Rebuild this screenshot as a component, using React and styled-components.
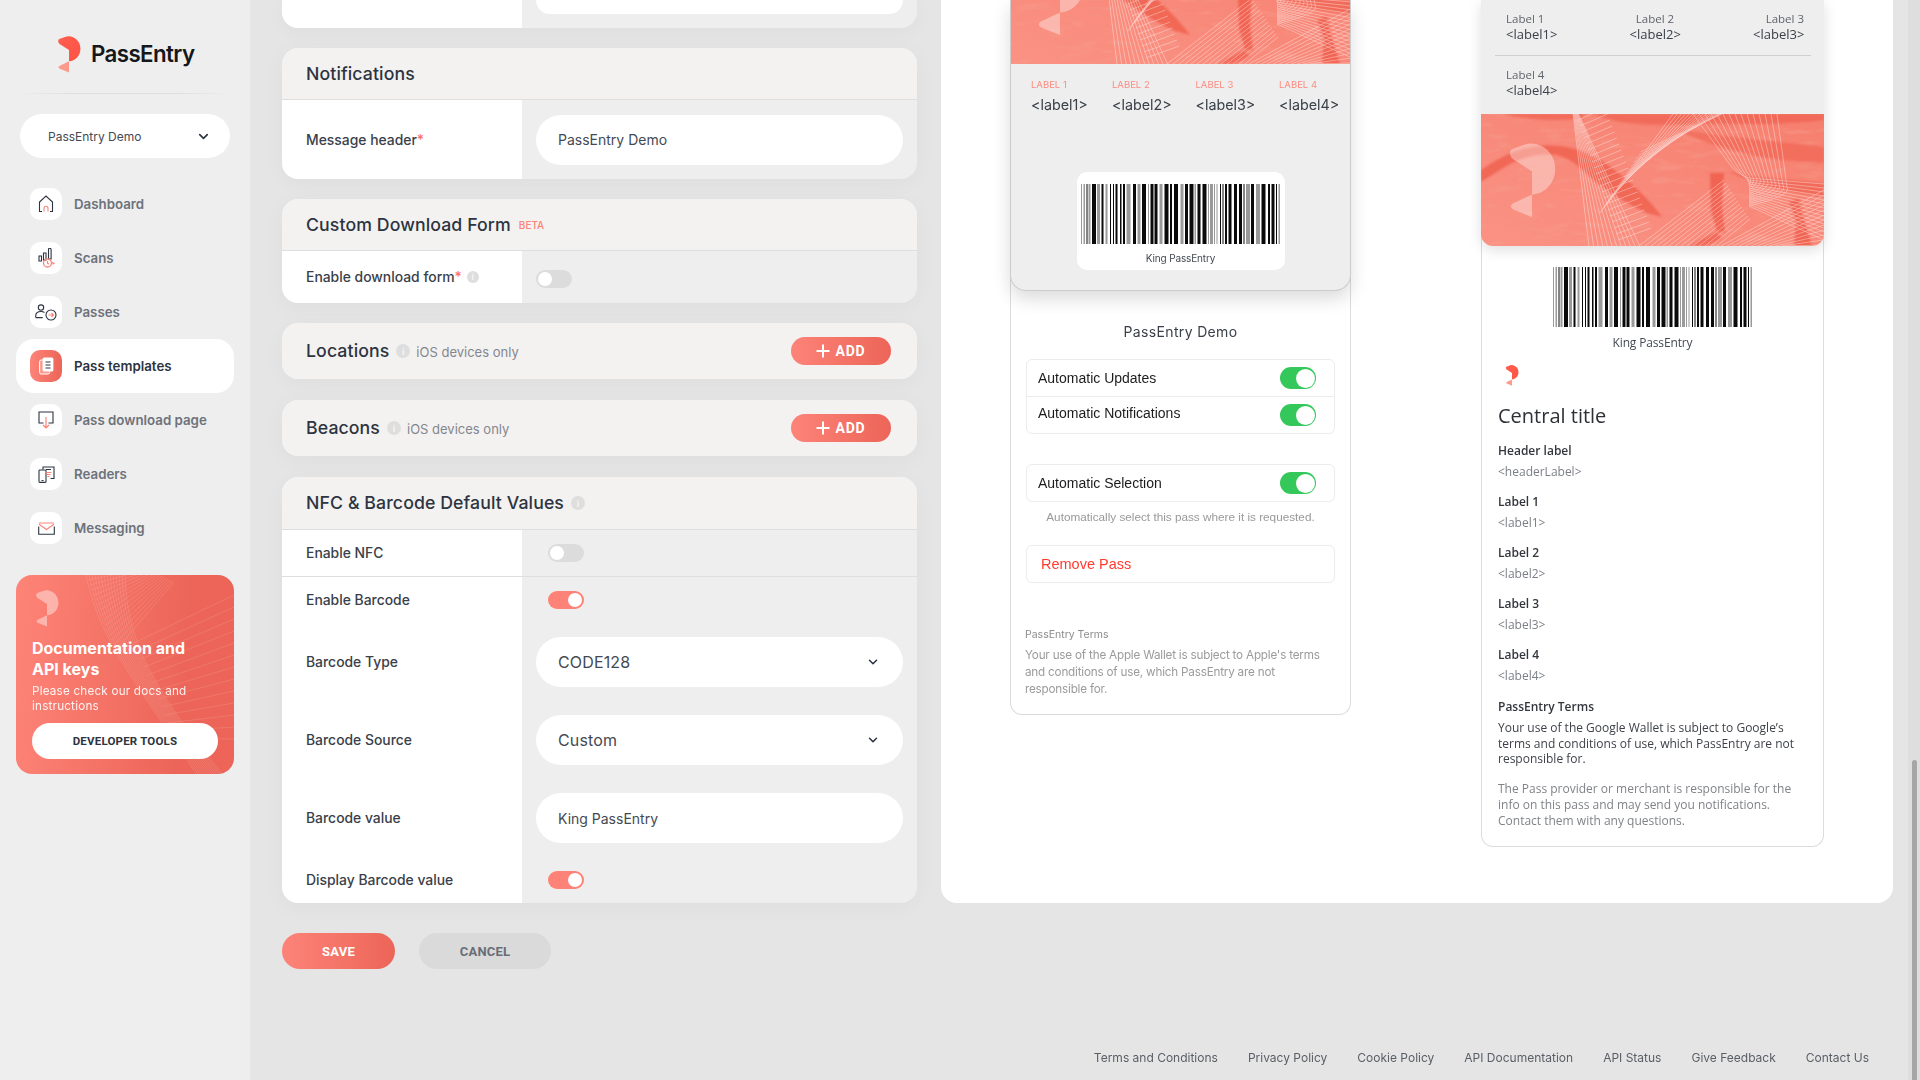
import React from "react";
import styled, { createGlobalStyle } from "styled-components";
import { ChevronDown } from "lucide-react";

const Global = createGlobalStyle`
  html, body { margin: 0; padding: 0; height: 1080px; overflow: hidden; background: #e5e5e5; }
  body { font-family: Inter, "Liberation Sans", sans-serif; color: #2d3440; }
  * { box-sizing: border-box; }
`;

const Page = styled.div`display: flex; width: 1920px; height: 1080px; overflow: hidden;`;

/* ---------- sidebar ---------- */
const Sidebar = styled.aside`
  width: 250px; flex: none; background: #eeeeee; padding: 36px 16px 0;
  display: flex; flex-direction: column;
`;
const Brand = styled.div`display: flex; align-items: center; gap: 10px; padding-left: 41px; height: 37px;`;
const BrandName = styled.span`font-size: 22.3px; font-weight: 600; letter-spacing: -0.6px; color: #15171a; margin-bottom: 3px;`;
const SideRule = styled.div`
  height: 1px; margin: 20px 0 20px;
  background: linear-gradient(90deg, transparent, #dfdfdf 25%, #dfdfdf 75%, transparent);
`;
const OrgSelect = styled.div`
  height: 44px; margin: 0 4px; border-radius: 22px; background: #fff; display: flex; align-items: center;
  justify-content: space-between; padding: 0 19px 0 28px; font-size: 12px; color: #444a53;
`;
const NavList = styled.nav`display: flex; flex-direction: column; margin-top: 19px;`;
const NavItem = styled.div`
  height: 54px; display: flex; align-items: center; gap: 12px; padding-left: 14px; border-radius: 18px;
  background: ${p => (p.$active ? "#fff" : "transparent")};
`;
const NavIcon = styled.span`
  width: 32px; height: 32px; border-radius: 10px; display: flex; align-items: center; justify-content: center;
  background: ${p => (p.$active ? "linear-gradient(90deg,#fd8378,#ec6558)" : "#fff")};
`;
const NavLabel = styled.span`
  font-size: 13.3px; font-weight: 600; color: ${p => (p.$active ? "#2d3440" : "#6d727a")};
`;
const Promo = styled.section`
  position: relative; overflow: hidden; margin-top: 20px; height: 199px; border-radius: 16px; color: #fff;
  background: linear-gradient(95deg,#fe8478,#ec6558 75%); padding: 15px 16px 0;
`;
const PromoLines = styled.svg`position: absolute; inset: 0; width: 100%; height: 100%;`;
const PromoBody = styled.div`position: relative; display: flex; flex-direction: column;`;
const PromoMark = styled.div`height: 37px; margin-left: 3px;`;
const PromoTitle = styled.div`font-size: 16px; line-height: 21px; font-weight: 700; margin-top: 11px;`;
const PromoText = styled.div`font-size: 11.7px; line-height: 15px; margin-top: 4px; opacity: .9; letter-spacing: .2px;`;
const PromoButton = styled.div`
  height: 36px; margin-top: 9px; border-radius: 18px; background: #fff; display: flex; align-items: center; justify-content: center;
  font-family: Roboto, sans-serif; font-size: 11.5px; font-weight: 700; color: #2d3440; letter-spacing: .2px;
`;

/* ---------- main ---------- */
const Main = styled.main`flex: 1; min-width: 0; display: flex; flex-direction: column; height: 1080px;`;
const Columns = styled.div`display: flex; align-items: flex-start; gap: 24px; padding-left: 32px; padding-right: 15px;`;
const FormCol = styled.div`width: 635px; flex: none; display: flex; flex-direction: column;`;

const Card = styled.section`
  border-radius: 16px; overflow: hidden; margin-bottom: ${p => p.$gap ?? 20}px;
  background: #eeeeee; box-shadow: 0 4px 22px rgba(0,0,0,.035);
`;
const ClippedCard = styled(Card)`
  border-radius: 0 0 16px 16px; height: 28px; display: grid; grid-template-columns: 240px 1fr;
`;
const ClippedLabel = styled.div`background: #fff;`;
const ClippedValue = styled.div`padding: 0 14px;`;
const ClippedInput = styled.div`height: 14px; background: #fff; border-radius: 0 0 22px 22px;`;
const CardHead = styled.header`
  height: ${p => p.$h || 52}px; background: #f3f2f1; display: flex; align-items: center; padding: 0 26px 0 24px;
  border-bottom: ${p => (p.$flat ? "none" : "1px solid #dedede")};
`;
const CardTitle = styled.h2`margin: 0 0 ${p => p.$up || 0}px; font-size: 17.7px; font-weight: 500; color: #2d3440; letter-spacing: .1px;`;
const Beta = styled.span`font-size: 10px; color: #fd8378; font-weight: 500; margin-left: 8px;`;
const Muted = styled.span`font-size: 13px; color: #83878d; margin-left: 6px; padding-top: 2px;`;
const Info = styled.span`
  display: inline-flex; align-items: center; justify-content: center; width: ${p => p.$s || 14}px; height: ${p => p.$s || 14}px;
  margin-left: ${p => p.$ml ?? 7}px; border-radius: 50%; background: #dedede; color: #f5f5f5; font-size: 9px; font-weight: 700;
`;
const AddButton = styled.div`
  margin-left: auto; width: 100px; height: 28px; border-radius: 14px; display: flex; align-items: center; justify-content: center; gap: 5px;
  background: linear-gradient(90deg,#fd8378,#ec6558); color: #fff; font-family: Roboto, sans-serif; font-weight: 700; font-size: 14px; letter-spacing: .8px;
`;
const PlusGlyph = styled.svg`display: block; width: 14px; height: 14px;`;
const Row = styled.div`
  display: grid; grid-template-columns: 240px 1fr; height: ${p => p.$h}px;
  border-bottom: ${p => (p.$rule ? "1px solid #dedede" : "none")};
`;
const RowLabel = styled.div`
  background: #fff; padding: ${p => p.$down ? "1px 0 0 24px" : "0 0 1px 24px"}; display: flex; align-items: center;
  font-size: 13.9px; font-weight: 500; color: #3a4049;
`;
const Star = styled.span`color: #fd6f62;`;
const RowValue = styled.div`display: flex; align-items: center; padding: ${p => p.$top ?? 0}px 14px 0 ${p => p.$left ?? 14}px;`;
const Pill = styled.div`
  flex: 1; height: 50px; border-radius: 25px; background: #fff; display: flex; align-items: center; justify-content: space-between;
  padding: 0 23px 0 22px; font-size: ${p => p.$big ? 16 : 14}px; color: #444a53; letter-spacing: ${p => p.$big ? ".15px" : "0"};
`;
const Toggle = styled.span`
  width: 36px; height: 18px; border-radius: 9px; position: relative; display: block;
  background: ${p => (p.$on ? "#fd8378" : "#dcdcdc")};
  &::after {
    content: ""; position: absolute; top: 2px; width: 14px; height: 14px; border-radius: 50%; background: #fff;
    ${p => (p.$on ? "right: 2px;" : "left: 2px;")}
  }
`;
const Actions = styled.div`display: flex; gap: 24px; margin-top: 10px;`;
const Btn = styled.div`
  height: 36px; width: ${p => p.$w}px; border-radius: 18px; display: flex; align-items: center; justify-content: center;
  font-family: Roboto, sans-serif; font-size: 13px; font-weight: 700; letter-spacing: .2px;
  background: ${p => (p.$primary ? "linear-gradient(90deg,#fd8378,#ec6558)" : "#dadada")};
  color: ${p => (p.$primary ? "#fff" : "#696e75")};
`;

/* ---------- preview panel ---------- */
const Panel = styled.section`
  width: 952px; height: 903px; flex: none; background: #fff; border-radius: 0 0 16px 16px; padding: 0 69px;
  display: flex; justify-content: space-between; align-items: flex-start;
`;
const Phone = styled.article`
  width: ${p => p.$w}px; border: 1px solid #dcdcdc; border-top: none; border-radius: 0 0 12px 12px; background: #fff;
`;
const IosPass = styled.div`
  margin: 0 -1px; background: #eeeeee; border: 1px solid #cccccc; border-top: none; border-radius: 0 0 16px 16px;
  box-shadow: 0 8px 18px rgba(0,0,0,.14); padding-bottom: 20px;
`;
const ArtClip = styled.div`height: ${p => p.$h}px; overflow: hidden; display: flex; align-items: flex-end;`;
const ArtSvg = styled.svg`display: block; flex: none; width: 100%; height: 132px;`;
const IosFields = styled.div`display: grid; grid-template-columns: 81px 83.5px 83.5px auto; padding: 14px 0 0 20px;`;
const IosKey = styled.div`font-size: 9.5px; line-height: 14px; color: #fd8c80; white-space: nowrap;`;
const IosVal = styled.div`font-size: 14.3px; line-height: 22px; margin-top: 2px; color: #3a4049; white-space: nowrap;`;
const CodeBox = styled.div`
  width: 208px; height: 98px; margin: 56px auto 0; background: #fff; border-radius: 10px; padding-top: 12px;
  display: flex; flex-direction: column; align-items: center;
`;
const BarSvg = styled.svg`display: block; width: 200px; height: 60px; flex: none;`;
const CodeCaption = styled.div`font-size: ${p => p.$s}px; line-height: 14px; margin-top: ${p => p.$mt}px; color: #444a53; letter-spacing: -.15px; text-align: center;`;
const IosBody = styled.div`padding: 31px 15px 16px;`;
const IosName = styled.div`font-size: 14px; line-height: 20px; text-align: center; color: #3a4049; letter-spacing: .35px;`;
const SetBox = styled.div`border: 1px solid #ececec; border-radius: 6px; margin-top: ${p => p.$mt}px;`;
const SetRow = styled.div`
  height: ${p => p.$h}px; display: flex; align-items: center; justify-content: space-between; padding: 0 18px 0 11px;
  font-family: "Liberation Sans", Arial, sans-serif; font-size: 14px; color: #1c1c1e;
  border-bottom: ${p => (p.$rule ? "1px solid #ececec" : "none")};
`;
const SetText = styled.span`margin-bottom: ${p => p.$up || 0}px;`;
const IosToggle = styled.span`
  width: 36px; height: 22px; border-radius: 11px; background: #34c759; position: relative; display: block;
  &::after { content: ""; position: absolute; right: 1.5px; top: 1.5px; width: 19px; height: 19px; border-radius: 50%; background: #fff; }
`;
const IosHelp = styled.div`
  font-family: "Liberation Sans", Arial, sans-serif; font-size: 11.75px; line-height: 16px; text-align: center; color: #999; margin-top: 7px;
`;
const Remove = styled.div`
  height: 38px; margin-top: 20px; border: 1px solid #ececec; border-radius: 6px; display: flex; align-items: center; padding-left: 14px;
  font-family: "Liberation Sans", Arial, sans-serif; font-size: 14.5px; color: #ff3b30;
`;
const IosTermsTitle = styled.div`font-size: 10.5px; line-height: 14px; color: #8d8d8d; margin: 45px 0 0 -1px;`;
const IosTerms = styled.p`font-size: 11.7px; line-height: 17px; color: #9b9b9b; margin: 5px 0 0 -1px; letter-spacing: -.2px;`;

const AndPass = styled.div`
  margin: 0 -1px; border-radius: 0 0 12px 12px; overflow: hidden; box-shadow: 0 4px 14px rgba(0,0,0,.13);
`;
const AndHead = styled.div`background: #eeeeee; height: 114px; padding-top: 11px; font-family: "Open Sans", sans-serif;`;
const AndFields = styled.div`display: flex; justify-content: ${p => p.$spread ? "space-between" : "flex-start"}; padding: 0 20px 0 25px;`;
const AndField = styled.div`text-align: ${p => p.$align || "left"}; width: 51px; white-space: nowrap;`;
const AndKey = styled.div`font-size: 11.5px; line-height: 15px; color: #60646b;`;
const AndVal = styled.div`font-size: 13px; line-height: 15px; margin-top: 1px; color: #3a4049;`;
const AndRule = styled.div`height: 1px; background: #cfcfcf; margin: 12.5px 13px 11px 14px;`;
const AndBody = styled.div`padding: 21px 0 18px; font-family: "Open Sans", sans-serif; display: flex; flex-direction: column;`;
const AndCode = styled.div`width: 200px; align-self: center;`;
const AndLogo = styled.div`margin: 15px 0 0 23px; height: 21px;`;
const AndText = styled.div`padding: 16px 25px 0 16px;`;
const Central = styled.h3`margin: 0; font-size: 20px; line-height: 28px; font-weight: 400; color: #2d3136;`;
const InfoKey = styled.div`font-size: 12px; line-height: 18px; font-weight: 600; color: #33373d; margin-top: 12.1px;`;
const InfoVal = styled.div`font-size: 12px; line-height: 18px; color: #7b7f85; margin-top: 3px;`;
const Para = styled.p`
  font-size: 12px; line-height: 15.7px; margin: ${p => p.$mt}px 0 0; color: ${p => p.$dim ? "#808388" : "#3e4248"};
`;

/* ---------- footer and scrollbar ---------- */
const Footer = styled.footer`
  margin-top: auto; display: flex; justify-content: flex-end; gap: 30px; padding: 0 39px 14px 0;
  font-size: 12px; line-height: 16px; color: #5a5f66;
`;
const Track = styled.div`width: 12px; flex: none; height: 1080px; background: #dedede; display: flex; flex-direction: column; justify-content: flex-end; padding: 0 3px 0 4px;`;
const Thumb = styled.div`height: 320px; background: #a6a6a6; border-radius: 3px 3px 0 0;`;

/* ---------- drawings ---------- */
const LOGO_A = "M1 5.5Q.6 3.5 2.8 2.7L8 .9C10 .1 12 0 14 .5C20 2 23.6 7 23.6 13C23.6 20 18.4 25.6 12 25.7L12 14.2L2.4 8Q1.2 7 1 5.5Z";
const LOGO_B = "M12 25.7L12 37L2.6 33.2Q.2 31.6 2.6 30.2Z";

function Logo({ w = 24, h = 37, id = "lg", solid }) {
  return (
    <svg width={w} height={h} viewBox="0 0 24 37.5" aria-hidden="true">
      <defs>
        <linearGradient id={id} x1="0" y1="0" x2="1" y2="1">
          <stop offset="0" stopColor="#ff5f50" /><stop offset="1" stopColor="#fd5244" />
        </linearGradient>
      </defs>
      <path d={LOGO_A} fill={solid || `url(#${id})`} />
      <path d={LOGO_B} fill={solid || "#fd9a8e"} />
    </svg>
  );
}

const bars = (() => {
  let s = 97, x = 0; const out = [];
  const rnd = () => ((s = (s * 16807) % 2147483647) % 1000) / 1000;
  while (x < 200) {
    const w = [1, 1, 1.5, 2, 2, 3, 4][Math.floor(rnd() * 7)];
    const g = [1, 1.5, 2, 1.5, 2.5][Math.floor(rnd() * 5)];
    const c = rnd() > 0.62 ? "#9a9a9a" : "#0a0a0a";
    out.push({ x, w: Math.min(w, 200 - x), c });
    x += w + g;
  }
  return out;
})();

function Barcode() {
  return (
    <BarSvg viewBox="0 0 200 60" aria-hidden="true">
      {bars.map((b, i) => <rect key={i} x={b.x} y="0" width={b.w} height="60" fill={b.c} />)}
    </BarSvg>
  );
}

function range(n) { return Array.from({ length: n }, (_, i) => i); }

function PassArt() {
  return (
    <ArtSvg viewBox="0 0 343 132" preserveAspectRatio="xMidYMax slice" aria-hidden="true">
      <defs>
        <filter id="artSoft" x="-5%" y="-5%" width="110%" height="110%"><feGaussianBlur stdDeviation=".9" /></filter>
        <filter id="artMottle" x="0" y="0" width="100%" height="100%">
          <feTurbulence type="fractalNoise" baseFrequency=".035 .14" numOctaves="3" seed="7" />
          <feColorMatrix values="0 0 0 0 .93  0 0 0 0 .36  0 0 0 0 .29  0 0 0 3.4 -1.75" />
        </filter>
        <linearGradient id="artBase" x1="0" y1="1" x2="1" y2="0">
          <stop offset="0" stopColor="#fa9284" /><stop offset="1" stopColor="#f67f6e" />
        </linearGradient>
      </defs>
      <rect width="343" height="132" fill="url(#artBase)" />
      <rect width="343" height="132" filter="url(#artMottle)" opacity=".38" />
      <g fill="#f0604f" filter="url(#artSoft)">
        <path d="M0 56C19 43 34 36 52 33C70 30 92 30 119 46C146 63 166 83 181 103L166 99C139 86 126 76 112 66C104 58 92 45 76 41C60 38 36 44 19 56L0 68Z" opacity=".85" />
        <path d="M196 16L252 23L343 33V49C318 48 298 46 279 43C250 36 220 28 196 16Z" opacity=".6" />
        <path d="M246 56C262 62 272 63 279 63L343 69V83C310 78 272 72 246 56Z" opacity=".7" />
        <path d="M22 0H102V4C80 7 50 7 22 0ZM112 0H343V6C300 12 250 9 190 11C160 12 130 8 112 0Z" opacity=".7" />
        <path d="M229 59H243L241 92L244 118H236L230 96Z" opacity=".9" />
        <path d="M208 132L235 118L241 124L226 132Z" opacity=".8" />
        <path d="M308 88L318 84L323 104L331 132H313L315 108Z" opacity=".9" />
      </g>
      <g stroke="#fff" strokeWidth=".6" opacity=".6" fill="none">
        {range(12).map(i => <line key={"a" + i} x1={92 + i * .5} y1="0" x2={108 + i * 4.6} y2="132" />)}
        {range(22).map(i => <line key={"b" + i} x1={95 + i * 2} y1={i * 6} x2={122 + i * 2.3} y2={i * 6 - 12} />)}
        {range(18).map(i => <line key={"c" + i} x1={119 + i * 2.4} y1={99 - i * 3.6} x2={192 + i * 5} y2={-i} />)}
        {range(14).map(i => <line key={"d" + i} x1={158 + i * 6} y1={132} x2={243 + i * 2} y2={66 + i * 3} />)}
        {range(15).map(i => <path key={"e" + i} d={`M${212 + i * 6} 0L${250 + i * 4} ${52 + i * 1.5}Q${256 + i * 4} ${60 + i * 1.5} 268 ${64 + i * 2}L343 ${70 + i * 4}`} />)}
        {range(14).map(i => <line key={"f" + i} x1={343} y1={76 + i * 5} x2={240 + i * 6} y2={132} />)}
      </g>
      <g fill="#fff" opacity=".36" transform="translate(27 29) scale(2)">
        <path d={LOGO_A} /><path d={LOGO_B} />
      </g>
    </ArtSvg>
  );
}

function PromoArt() {
  return (
    <PromoLines viewBox="0 0 218 199" preserveAspectRatio="none" aria-hidden="true">
      <g stroke="#fff" fill="none" strokeWidth=".55" opacity=".22">
        {range(14).map(i => <path key={"m" + i} d={`M${70 + i * 3} 0C${84 + i * 2} 70 ${130 + i} 120 ${180 + i * 2} 199`} />)}
        {range(16).map(i => <line key={"n" + i} x1={70 + i * 2} y1={i * 5} x2={128 + i * 2} y2={-8 + i} />)}
        {range(13).map(i => <line key={"o" + i} x1={118 + i * 3.4} y1={68 + i * 8} x2={218} y2={20 + i * 12} />)}
      </g>
    </PromoLines>
  );
}

const ink = "#2d3440", acc = "#fd8378";
const icons = {
  home: <svg width="16" height="18" viewBox="0 0 16 18" fill="none" strokeWidth="1.1"><path stroke={ink} d="M4 16.5H1.5V7L8 1l6.5 6v9.5H12" /><path stroke={acc} d="M6 16.5v-3.2a2 2 0 0 1 4 0v3.2" /></svg>,
  scans: <svg width="17" height="20" viewBox="0 0 17 20" fill="none" strokeWidth="1.1"><path stroke={ink} d="M1 8h2.5v5H1zM5.5 5H8v7H5.5zM10.5 1.5a1.3 1.3 0 0 1 2.6 0V11h-2.6z" /><circle cx="9.5" cy="15" r="4" stroke={acc} strokeWidth="1.3" /><path stroke={acc} d="M9.5 13v2.3l1.5.7M14 14.5l2 .8-1.4 1" /></svg>,
  passes: <svg width="22" height="17" viewBox="0 0 22 17" fill="none" strokeWidth="1.1"><circle cx="6" cy="3.6" r="2.7" stroke={ink} /><path stroke={ink} d="M.7 13.5v-1.5c0-2.6 2-4.5 5.3-4.5 1.5 0 2.7.4 3.5 1M.7 13.6h7" /><circle cx="16" cy="11" r="5" stroke={ink} /><path stroke={acc} d="M13.5 11h5M16.5 9l2 2-2 2" /></svg>,
  template: <svg width="15" height="18" viewBox="0 0 15 18" fill="none"><rect x=".6" y="3" width="10" height="14" rx="1.5" stroke="#fff" strokeWidth="1" fill="#fd9a8e" /><rect x="3.6" y=".6" width="10.8" height="14" rx="1.5" fill="#fff" /><path stroke={ink} strokeWidth="1" d="M6.5 5h5M6.5 8h5M6.5 11h5" /></svg>,
  download: <svg width="16" height="18" viewBox="0 0 16 18" fill="none" strokeWidth="1.1"><path stroke={ink} d="M5.5 12H1V1h14v11h-4.5" /><path stroke={acc} strokeWidth="1.2" d="M8 6v11M5 14l3 3 3-3" /></svg>,
  readers: <svg width="17" height="17" viewBox="0 0 17 17" fill="none" strokeWidth="1.1"><path stroke={ink} d="M5 3.5V1h11v11.5h-3.5" /><rect x="1" y="4" width="7" height="12.4" rx=".8" stroke={ink} /><path stroke={ink} d="M3.5 14.5h2M8 3.5h5" /><path stroke={acc} d="M7.5 6.5h6M8.5 8.5h4M9.5 10.5h2" /></svg>,
  mail: <svg width="17" height="13" viewBox="0 0 17 13" fill="none" strokeWidth="1.1"><path stroke={acc} d="M1 2.2 8.5 7.5 16 2.2M1 1h15" /><path stroke={ink} d="M.7 4.5V12.3h15.6V4.5" /></svg>,
};

const nav = [
  ["home", "Dashboard"], ["scans", "Scans"], ["passes", "Passes"], ["template", "Pass templates", true],
  ["download", "Pass download page"], ["readers", "Readers"], ["mail", "Messaging"],
];

const footerLinks = ["Terms and Conditions", "Privacy Policy", "Cookie Policy", "API Documentation", "API Status", "Give Feedback", "Contact Us"];

const Chevron = () => <ChevronDown size={15} strokeWidth={2.6} color="#2d3440" />;
const SmallChevron = () => <ChevronDown size={14} strokeWidth={2.6} color="#2d3440" />;
const Add = () => (
  <AddButton>
    <PlusGlyph viewBox="0 0 14 14" aria-hidden="true"><path d="M7 .5v13M.5 7h13" stroke="#fff" strokeWidth="2" /></PlusGlyph>
    ADD
  </AddButton>
);

export default function App() {
  return (
    <Page>
      <Global />
      <Sidebar>
        <Brand><Logo id="brand" /><BrandName>PassEntry</BrandName></Brand>
        <SideRule />
        <OrgSelect>PassEntry Demo<Chevron /></OrgSelect>
        <NavList>
          {nav.map(([k, l, a]) => (
            <NavItem key={l} $active={a}>
              <NavIcon $active={a}>{icons[k]}</NavIcon>
              <NavLabel $active={a}>{l}</NavLabel>
            </NavItem>
          ))}
        </NavList>
        <Promo>
          <PromoArt />
          <PromoBody>
            <PromoMark><Logo w={24} h={37} id="promo" solid="rgba(255,255,255,.42)" /></PromoMark>
            <PromoTitle>Documentation and<br />API keys</PromoTitle>
            <PromoText>Please check our docs and<br />instructions</PromoText>
            <PromoButton>DEVELOPER TOOLS</PromoButton>
          </PromoBody>
        </Promo>
      </Sidebar>

      <Main>
        <Columns>
          <FormCol>
            <ClippedCard>
              <ClippedLabel />
              <ClippedValue><ClippedInput /></ClippedValue>
            </ClippedCard>

            <Card>
              <CardHead><CardTitle>Notifications</CardTitle></CardHead>
              <Row $h={79}>
                <RowLabel $down>Message header<Star>*</Star></RowLabel>
                <RowValue><Pill>PassEntry Demo</Pill></RowValue>
              </Row>
            </Card>

            <Card>
              <CardHead><CardTitle>Custom Download Form</CardTitle><Beta>BETA</Beta></CardHead>
              <Row $h={52}>
                <RowLabel>Enable download form<Star>*</Star><Info $s={12} $ml={5}>i</Info></RowLabel>
                <RowValue $top={4}><Toggle /></RowValue>
              </Row>
            </Card>

            <Card $gap={21}>
              <CardHead $h={56} $flat><CardTitle $up={2}>Locations</CardTitle><Info>i</Info><Muted>iOS devices only</Muted><Add /></CardHead>
            </Card>
            <Card $gap={21}>
              <CardHead $h={56} $flat><CardTitle $up={2}>Beacons</CardTitle><Info>i</Info><Muted>iOS devices only</Muted><Add /></CardHead>
            </Card>

            <Card $gap={20}>
              <CardHead $h={53}><CardTitle $up={2}>NFC &amp; Barcode Default Values</CardTitle><Info>i</Info></CardHead>
              <Row $h={47} $rule>
                <RowLabel>Enable NFC</RowLabel>
                <RowValue $left={26}><Toggle /></RowValue>
              </Row>
              <Row $h={46}>
                <RowLabel>Enable Barcode</RowLabel>
                <RowValue $left={26}><Toggle $on /></RowValue>
              </Row>
              <Row $h={78}>
                <RowLabel>Barcode Type</RowLabel>
                <RowValue><Pill $big>CODE128<SmallChevron /></Pill></RowValue>
              </Row>
              <Row $h={78}>
                <RowLabel>Barcode Source</RowLabel>
                <RowValue><Pill $big>Custom<SmallChevron /></Pill></RowValue>
              </Row>
              <Row $h={78}>
                <RowLabel>Barcode value</RowLabel>
                <RowValue><Pill>King PassEntry</Pill></RowValue>
              </Row>
              <Row $h={46}>
                <RowLabel>Display Barcode value</RowLabel>
                <RowValue $left={26}><Toggle $on /></RowValue>
              </Row>
            </Card>

            <Actions>
              <Btn $primary $w={113}>SAVE</Btn>
              <Btn $w={132}>CANCEL</Btn>
            </Actions>
          </FormCol>

          <Panel>
            <Phone $w={341}>
              <IosPass>
                <ArtClip $h={64}><PassArt /></ArtClip>
                <IosFields>
                  {[1, 2, 3, 4].map(n => (
                    <div key={n}>
                      <IosKey>LABEL {n}</IosKey>
                      <IosVal>{`<label${n}>`}</IosVal>
                    </div>
                  ))}
                </IosFields>
                <CodeBox>
                  <Barcode />
                  <CodeCaption $s={10} $mt={7}>King PassEntry</CodeCaption>
                </CodeBox>
              </IosPass>
              <IosBody>
                <IosName>PassEntry Demo</IosName>
                <SetBox $mt={17}>
                  <SetRow $h={37} $rule>Automatic Updates<IosToggle /></SetRow>
                  <SetRow $h={36}><SetText $up={4}>Automatic Notifications</SetText><IosToggle /></SetRow>
                </SetBox>
                <SetBox $mt={30}>
                  <SetRow $h={36}>Automatic Selection<IosToggle /></SetRow>
                </SetBox>
                <IosHelp>Automatically select this pass where it is requested.</IosHelp>
                <Remove>Remove Pass</Remove>
                <IosTermsTitle>PassEntry Terms</IosTermsTitle>
                <IosTerms>Your use of the Apple Wallet is subject to Apple's terms and conditions of use, which PassEntry are not responsible for.</IosTerms>
              </IosBody>
            </Phone>

            <Phone $w={343}>
              <AndPass>
                <AndHead>
                  <AndFields $spread>
                    <AndField><AndKey>Label 1</AndKey><AndVal>{"<label1>"}</AndVal></AndField>
                    <AndField $align="center"><AndKey>Label 2</AndKey><AndVal>{"<label2>"}</AndVal></AndField>
                    <AndField $align="right"><AndKey>Label 3</AndKey><AndVal>{"<label3>"}</AndVal></AndField>
                  </AndFields>
                  <AndRule />
                  <AndFields>
                    <AndField><AndKey>Label 4</AndKey><AndVal>{"<label4>"}</AndVal></AndField>
                  </AndFields>
                </AndHead>
                <ArtClip $h={132}><PassArt /></ArtClip>
              </AndPass>
              <AndBody>
                <AndCode>
                  <Barcode />
                  <CodeCaption $s={12} $mt={9}>King PassEntry</CodeCaption>
                </AndCode>
                <AndLogo><Logo w={14} h={21} id="small" /></AndLogo>
                <AndText>
                  <Central>Central title</Central>
                  <InfoKey>Header label</InfoKey><InfoVal>{"<headerLabel>"}</InfoVal>
                  {[1, 2, 3, 4].map(n => (
                    <React.Fragment key={n}>
                      <InfoKey>Label {n}</InfoKey><InfoVal>{`<label${n}>`}</InfoVal>
                    </React.Fragment>
                  ))}
                  <InfoKey>PassEntry Terms</InfoKey>
                  <Para $mt={4.5}>Your use of the Google Wallet is subject to Google’s terms and conditions of use, which PassEntry are not responsible for.</Para>
                  <Para $mt={14} $dim>The Pass provider or merchant is responsible for the info on this pass and may send you notifications. Contact them with any questions.</Para>
                </AndText>
              </AndBody>
            </Phone>
          </Panel>
        </Columns>
        <Footer>{footerLinks.map(l => <span key={l}>{l}</span>)}</Footer>
      </Main>
      <Track><Thumb /></Track>
    </Page>
  );
}
